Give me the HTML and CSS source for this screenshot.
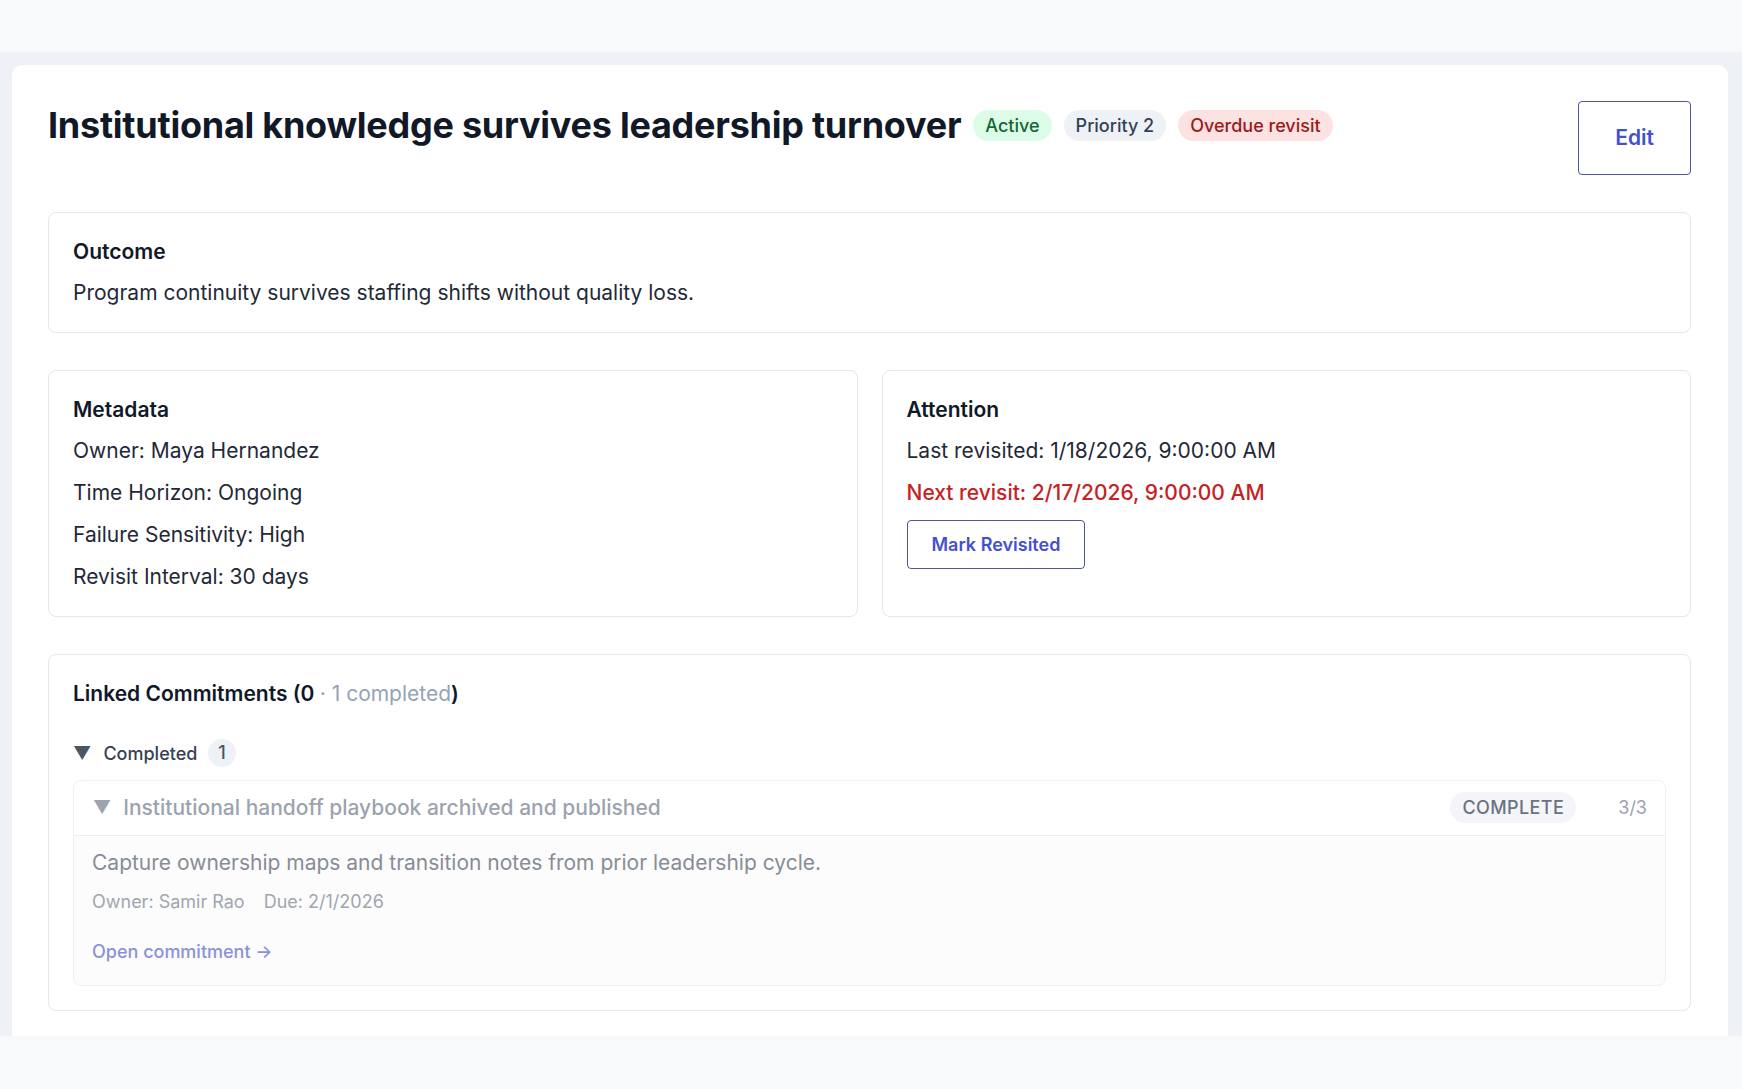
FILE: index.html
```html
<!DOCTYPE html>
<html>

<head>
    <title>Goal detail</title>
    <meta charset="UTF-8">
    <link rel="stylesheet" href="styles.css">
</head>

<body>
    <div class="topbar"></div>
    <div class="page">
        <div class="card">
            <div class="header">
                <div class="title-row">
                    <h1>Institutional knowledge survives leadership turnover</h1>
                    <span class="badge badge-green">Active</span>
                    <span class="badge badge-gray">Priority 2</span>
                    <span class="badge badge-red">Overdue revisit</span>
                </div>
                <button class="btn btn-large">Edit</button>
            </div>

            <div class="box">
                <h3>Outcome</h3>
                <p>Program continuity survives staffing shifts without quality loss.</p>
            </div>

            <div class="two-col">
                <div class="box">
                    <h3>Metadata</h3>
                    <p>Owner: Maya Hernandez</p>
                    <p>Time Horizon: Ongoing</p>
                    <p>Failure Sensitivity: High</p>
                    <p>Revisit Interval: 30 days</p>
                </div>
                <div class="box">
                    <h3>Attention</h3>
                    <p>Last revisited: 1/18/2026, 9:00:00 AM</p>
                    <p class="overdue">Next revisit: 2/17/2026, 9:00:00 AM</p>
                    <button class="btn">Mark Revisited</button>
                </div>
            </div>

            <div class="box linked">
                <h3>Linked Commitments (0 <span class="muted">· 1 completed</span>)</h3>
                <div class="group">
                    <div class="group-head">
                        <span class="caret">▼</span>
                        <span>Completed</span>
                        <span class="count">1</span>
                    </div>
                    <div class="item">
                        <div class="item-head">
                            <span class="caret">▼</span>
                            <span class="item-title">Institutional handoff playbook archived and published</span>
                            <span class="status">COMPLETE</span>
                            <span class="progress">3/3</span>
                        </div>
                        <div class="item-body">
                            <p class="desc">Capture ownership maps and transition notes from prior leadership cycle.</p>
                            <div class="meta">
                                <span>Owner: Samir Rao</span>
                                <span>Due: 2/1/2026</span>
                            </div>
                            <a class="open-link" href="#">Open commitment →</a>
                        </div>
                    </div>
                </div>
            </div>
        </div>
    </div>
</body>

</html>
```

FILE: styles.css
```css
* {
    box-sizing: border-box;
}

body {
    margin: 0;
    font-family: Inter, "Noto Sans", sans-serif;
    color: #1f2937;
    background-color: #f8f9fb;
}

.topbar {
    height: 52px;
    background-color: #f8f9fb;
}

.page {
    height: 984px;
    overflow: hidden;
    background-color: #eef1f5;
    padding: 13px 14px 0 12px;
}

.card {
    background-color: #fff;
    border-radius: 10px 10px 0 0;
    padding: 36px 37px 40px 36px;
    display: flex;
    flex-direction: column;
    gap: 37px;
    min-height: 100%;
}

.header {
    display: flex;
    justify-content: space-between;
    align-items: flex-start;
}

.title-row {
    display: flex;
    align-items: center;
    gap: 12px;
}

h1 {
    margin: 0;
    font-size: 36px;
    line-height: 48px;
    font-weight: 700;
    color: #111827;
    letter-spacing: -0.25px;
}

.badge {
    font-size: 18px;
    line-height: 23px;
    padding: 4px 12px;
    border-radius: 999px;
    font-weight: 500;
}

.badge-green {
    background-color: #dcfce7;
    color: #166534;
}

.badge-gray {
    background-color: #eef1f6;
    color: #334155;
}

.badge-red {
    background-color: #fde2e2;
    color: #991b1b;
}

.btn {
    font-family: inherit;
    background-color: #fff;
    border: 1px solid #4c559e;
    border-radius: 4px;
    color: #4450d0;
    font-size: 18px;
    line-height: 25px;
    font-weight: 600;
    padding: 11px 24px;
    cursor: pointer;
    align-self: flex-start;
}

.btn-large {
    font-size: 21px;
    line-height: 32px;
    padding: 20px 36px;
}

.box {
    border: 1px solid #e5e7eb;
    border-radius: 8px;
    padding: 25px 24px 24px 24px;
    display: flex;
    flex-direction: column;
    gap: 12px;
}

.box h3 {
    margin: 0;
    font-size: 21px;
    line-height: 28px;
    font-weight: 600;
    color: #111827;
}

.box p {
    margin: 0;
    font-size: 21px;
    line-height: 30px;
    color: #1f2937;
}

.two-col {
    display: grid;
    grid-template-columns: 1fr 1fr;
    gap: 24px;
}

.box p.overdue {
    color: #c42326;
    font-weight: 500;
}

.muted {
    color: #94a3b8;
    font-weight: 400;
}

.linked {
    gap: 0;
}

.group {
    margin-top: 31px;
}

.group-head {
    display: flex;
    align-items: center;
    gap: 11px;
    font-size: 18px;
    font-weight: 500;
    color: #374151;
    height: 28px;
}

.group-head .caret {
    color: #4b5563;
    font-size: 18px;
    margin-right: 1px;
}

.count {
    background-color: #eef1f6;
    color: #475569;
    border-radius: 999px;
    padding: 1px 10px;
    line-height: 26px;
}

.item {
    margin-top: 13px;
    border: 1px solid #eef0f3;
    border-radius: 8px;
    background-color: #fcfcfd;
}

.item-head {
    display: flex;
    align-items: center;
    gap: 12px;
    padding: 11px 18px 12px 19px;
    background-color: #fff;
    border-bottom: 1px solid #eceef1;
    border-radius: 8px 8px 0 0;
}

.item-head .caret {
    color: #9ca3af;
    font-size: 18px;
}

.item-title {
    flex: 1;
    font-size: 21px;
    line-height: 30px;
    font-weight: 500;
    color: #9ca3af;
}

.status {
    background-color: #f3f5f8;
    color: #6b7280;
    font-size: 18px;
    line-height: 23px;
    font-weight: 500;
    letter-spacing: 0.4px;
    padding: 4px 12px;
    border-radius: 999px;
}

.progress {
    margin-left: 30px;
    font-size: 18px;
    color: #9ca3af;
}

.item-body {
    padding: 12px 18px 21px 18px;
}

.item-body .desc {
    margin: 0;
    font-size: 21px;
    line-height: 30px;
    color: #878d96;
}

.meta {
    display: flex;
    gap: 19px;
    margin-top: 11px;
    font-size: 18px;
    line-height: 25px;
    color: #a0a6b0;
}

.open-link {
    display: inline-block;
    margin-top: 25px;
    font-size: 18px;
    line-height: 25px;
    font-weight: 500;
    color: #8a92d6;
    text-decoration: none;
}
```
